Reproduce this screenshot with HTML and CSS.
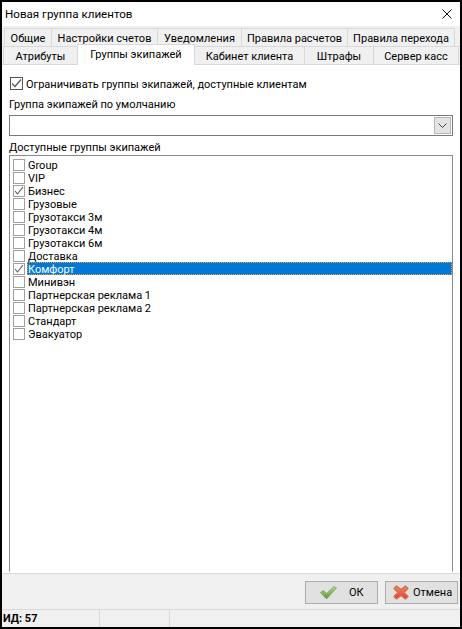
FILE: index.html
```html
<!DOCTYPE html>
<html lang="ru">
<head>
<meta charset="utf-8">
<title>Новая группа клиентов</title>
<link rel="stylesheet" href="styles.css">
</head>
<body>
<div class="window">
  <header class="titlebar">
    <span class="title">Новая группа клиентов</span>
    <svg class="close" width="10" height="10" viewBox="0 0 10 10"><path d="M.5.5l9 9M9.500.5l-9 9" stroke="#111" stroke-width="1" fill="none"/></svg>
  </header>
  <div class="tabs">
    <div class="tabrow row1">
      <div class="tab t1">Общие</div>
      <div class="tab t2">Настройки счетов</div>
      <div class="tab t3">Уведомления</div>
      <div class="tab t4">Правила расчетов</div>
      <div class="tab t5">Правила перехода</div>
    </div>
    <div class="tabrow row2">
      <div class="tab t6">Атрибуты</div>
      <div class="tab t7 active">Группы экипажей</div>
      <div class="tab t8">Кабинет клиента</div>
      <div class="tab t9">Штрафы</div>
      <div class="tab t10">Сервер касс</div>
    </div>
  </div>
  <main class="panel">
    <label class="limit">
      <span class="box big"><svg width="11" height="11" viewBox="0 0 11 11"><path d="M1 5.500l3 3 6-7" stroke="#555" stroke-width="1.200" fill="none"/></svg></span>
      <span class="limit-text">Ограничивать группы экипажей, доступные клиентам</span>
    </label>
    <div class="field-label default-label">Группа экипажей по умолчанию</div>
    <div class="combo">
      <span class="drop"><svg width="9" height="5" viewBox="0 0 9 5"><path d="M.5.5l4 4 4-4" stroke="#444" fill="none"/></svg></span>
    </div>
    <div class="field-label avail-label">Доступные группы экипажей</div>
    <div class="list">
      <div class="item"><span class="box"></span><span class="name">Group</span></div>
      <div class="item"><span class="box"></span><span class="name">VIP</span></div>
      <div class="item"><span class="box"><svg width="10" height="10" viewBox="0 0 10 10"><path d="M1 5l2.500 3 5.500-7" stroke="#555" stroke-width="1.100" fill="none"/></svg></span><span class="name">Бизнес</span></div>
      <div class="item"><span class="box"></span><span class="name">Грузовые</span></div>
      <div class="item"><span class="box"></span><span class="name">Грузотакси 3м</span></div>
      <div class="item"><span class="box"></span><span class="name">Грузотакси 4м</span></div>
      <div class="item"><span class="box"></span><span class="name">Грузотакси 6м</span></div>
      <div class="item"><span class="box"></span><span class="name">Доставка</span></div>
      <div class="item selected"><span class="box"><svg width="10" height="10" viewBox="0 0 10 10"><path d="M1 5l2.500 3 5.500-7" stroke="#555" stroke-width="1.100" fill="none"/></svg></span><span class="name">Комфорт</span></div>
      <div class="item"><span class="box"></span><span class="name">Минивэн</span></div>
      <div class="item"><span class="box"></span><span class="name">Партнерская реклама 1</span></div>
      <div class="item"><span class="box"></span><span class="name">Партнерская реклама 2</span></div>
      <div class="item"><span class="box"></span><span class="name">Стандарт</span></div>
      <div class="item"><span class="box"></span><span class="name">Эвакуатор</span></div>
    </div>
  </main>
  <div class="actions">
    <button class="btn ok">
      <svg width="17" height="13" viewBox="0 0 17 13"><defs><linearGradient id="g" x1="0" y1="0" x2="0" y2="1"><stop offset="0" stop-color="#b5d98a"/><stop offset="1" stop-color="#5f9a3a"/></linearGradient></defs><path d="M.5 6.500L3.500 4.500 6.500 7.500 14 .5 16.500 2 7 12.500H6z" fill="url(#g)" stroke="#6f9c4c" stroke-width=".7" stroke-linejoin="round"/></svg>
      <span>ОК</span>
    </button>
    <button class="btn cancel">
      <svg width="16" height="15" viewBox="0 0 16 15"><defs><linearGradient id="r" x1="0" y1="0" x2="0" y2="1"><stop offset="0" stop-color="#f08a66"/><stop offset="1" stop-color="#d8432a"/></linearGradient></defs><path d="M1 3.500L3.500 1 8 4.500 12.500 1 15 3.500 11 7.500 15 11.500 12.500 14 8 10.500 3.500 14 1 11.500 5 7.500z" fill="url(#r)" stroke="#d9694c" stroke-width="1.200" stroke-linejoin="round"/></svg>
      <span>Отмена</span>
    </button>
  </div>
  <footer class="status">
    <div class="cell c1">ИД: 57</div>
    <div class="cell c2"></div>
    <div class="cell c3"></div>
  </footer>
</div>
</body>
</html>
```

FILE: styles.css
```css
* { box-sizing: border-box; }
html, body { margin: 0; padding: 0; }
body {
  width: 462px;
  height: 629px;
  background: #000;
  font-family: Roboto, "Noto Sans", sans-serif;
  font-size: 11px;
  color: #000;
  overflow: hidden;
}
.window {
  margin: 2px;
  width: 458px;
  height: 625px;
  background: #f0f0f0;
  display: flex;
  flex-direction: column;
}
.titlebar {
  height: 24px;
  flex: none;
  background: #fff;
  display: flex;
  align-items: center;
  justify-content: space-between;
  padding: 0 8px 0 3px;
  font-size: 11.6px;
}
.tabs {
  height: 38px;
  flex: none;
  padding-top: 2px;
  display: flex;
  flex-direction: column;
}
.tabrow { display: flex; height: 19px; flex: none; }
.row1 { padding-left: 3px; height: 18px; }
.row2 { padding-left: 1px; height: 18px; }
.tab {
  border: 1px solid #d9d9d9;
  border-bottom: 0;
  background: #f0f0f0;
  text-align: center;
  line-height: 19px;
  white-space: nowrap;
  flex: none;
  margin-left: -1px;
}
.row2 .tab { line-height: 20px; }
.t1 { width: 48px; }
.t2 { width: 107px; }
.t3 { width: 85px; }
.t4 { width: 107px; }
.t5 { width: 108px; }
.t6 { width: 75px; margin-left: 0; }
.t7 { width: 118px; }
.t8 { width: 111px; }
.t9 { width: 70px; }
.t10 { width: 86px; }
.row2 .active {
  background: #fff;
  height: 21px;
  margin-top: -2px;
  line-height: 19px;
  position: relative;
  z-index: 1;
}
.panel {
  height: 510px;
  flex: none;
  background: #fff;
  border-top: 1px solid #d9d9d9;
  border-bottom: 1px solid #d9d9d9;
  padding: 0 7px;
  display: flex;
  flex-direction: column;
}
.limit {
  display: flex;
  align-items: center;
  gap: 3px;
  height: 15px;
  margin: 11px 0 0 1px;
}
.limit-text { line-height: 17px; height: 15px; }
.box {
  width: 12px;
  height: 12px;
  flex: none;
  border: 1px solid #a0a0a0;
  background: #fff;
  display: flex;
  align-items: center;
  justify-content: center;
}
.box.big { width: 13px; height: 13px; border-color: #555; }
.field-label { height: 14px; line-height: 14px; }
.default-label { margin-top: 7px; }
.avail-label { margin-top: 5px; }
.combo {
  height: 21px;
  margin-top: 3px;
  border: 1px solid #7a7a7a;
  background: #fff;
  display: flex;
  justify-content: flex-end;
  align-items: center;
  padding-right: 1px;
}
.drop {
  width: 17px;
  height: 17px;
  background: #e4e4e4;
  border: 1px solid #b5b5b5;
  display: flex;
  align-items: center;
  justify-content: center;
}
.list {
  flex: 1;
  margin-bottom: 1px;
  border: 1px solid #8a8a8a;
  border-bottom-color: #fff;
  padding: 2px 0 0 3px;
  display: flex;
  flex-direction: column;
}
.item { height: 13px; display: flex; align-items: center; flex: none; }
.name { padding: 0 0 0 1px; margin-left: 2px; flex: 1; height: 13px; line-height: 15px; }
.selected .name {
  background: #0078d7;
  color: #fff;
  outline: 1px dotted #ff9a2e;
  outline-offset: -1px;
}
.actions {
  height: 35px;
  flex: none;
  display: flex;
  justify-content: flex-end;
  align-items: center;
  gap: 7px;
  padding: 1px 2px 0 0;
}
.btn {
  height: 23px;
  width: 73px;
  background: #e1e1e1;
  border: 1px solid #adadad;
  font: inherit;
  color: #000;
  display: flex;
  align-items: center;
  padding: 0;
}
.ok { gap: 12px; padding-left: 14px; }
.cancel { gap: 4px; padding-left: 7px; }
.status {
  height: 18px;
  flex: none;
  border-top: 1px solid #d9d9d9;
  display: flex;
  font-weight: 700;
}
.cell { border-right: 1px solid #d9d9d9; line-height: 17px; padding-left: 1px; flex: none; }
.c1 { width: 98px; }
.c2 { width: 70px; }
.c3 { border: 0; flex: 1; }
```
